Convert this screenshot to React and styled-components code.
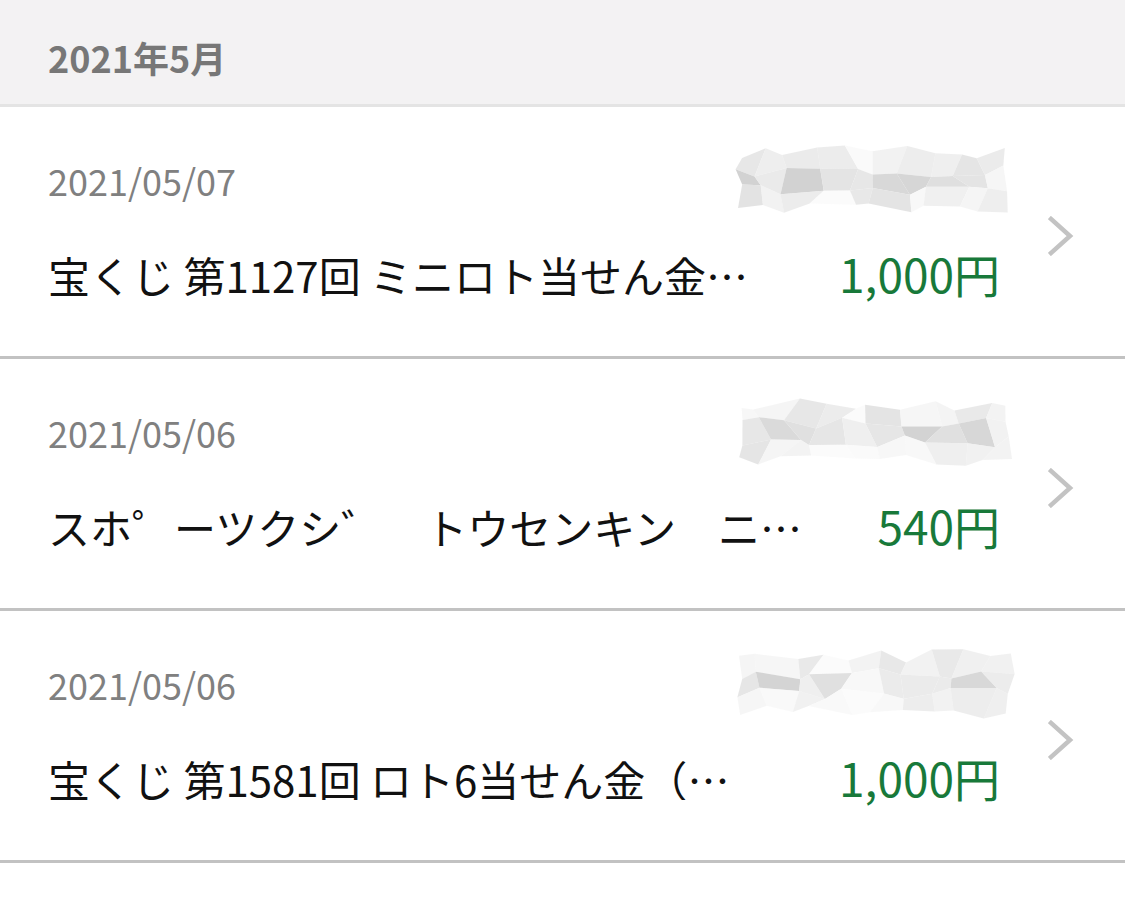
import React from "react";
import styled, { createGlobalStyle } from "styled-components";

const Global = createGlobalStyle`
  html, body { margin: 0; padding: 0; background: #ffffff; }
  body { font-family: "Noto Sans CJK JP", "Noto Sans", sans-serif; }
`;

const Page = styled.div`
  width: 1125px;
  background: #ffffff;
`;

const MonthHeader = styled.div`
  height: 107px;
  box-sizing: border-box;
  padding: 10px 0 0 48px;
  display: flex;
  align-items: center;
  background: #f3f2f3;
  border-bottom: 3px solid #e4e4e4;
  color: #777777;
  font-size: 36px;
  font-weight: 700;
  line-height: 1;
`;

const Row = styled.div`
  height: 249px;
  display: grid;
  grid-template-columns: 1fr 26px;
  column-gap: 48px;
  padding: 0 51px 0 48px;
  align-items: center;
  border-bottom: 3px solid #c2c2c2;
`;

const Main = styled.div`
  display: flex;
  flex-direction: column;
  min-width: 0;
  align-self: start;
  padding-top: 38px;
`;

const TopLine = styled.div`
  height: 70px;
  display: flex;
  align-items: center;
  justify-content: space-between;
`;

const DateText = styled.span`
  font-size: 36px;
  line-height: 1;
  color: #808080;
`;

const BottomLine = styled.div`
  margin-top: 35px;
  display: flex;
  align-items: baseline;
  gap: 70px;
`;

const Title = styled.span`
  flex: 1;
  min-width: 0;
  font-size: 42px;
  line-height: 1;
  color: #111111;
  white-space: nowrap;
  overflow: hidden;
  text-overflow: ellipsis;
`;

const Amount = styled.span`
  flex: none;
  font-size: 46px;
  line-height: 1;
  color: #18793a;
`;

const MosaicSvg = styled.svg`
  display: block;
  margin-right: -15px;
  flex: none;
`;

const ChevronSvg = styled.svg`
  display: block;
  margin-top: 8px;
`;

function rng(seed) {
  let s = seed;
  return () => {
    s = (s * 9301 + 49297) % 233280;
    return s / 233280;
  };
}

function Mosaic({ seed }) {
  const r = rng(seed);
  const cols = 10;
  const rows = 3;
  const W = 280;
  const H = 72;
  const cw = W / cols;
  const rh = (H - 16) / rows;
  const v = [];
  for (let i = 0; i <= cols; i++) {
    v[i] = [];
    for (let j = 0; j <= rows; j++) {
      const jx = i === 0 ? r() * 8 : i === cols ? -r() * 12 : (r() - 0.5) * cw * 0.8;
      const jy =
        j === 0 || j === rows ? (r() - 0.5) * 14 : (r() - 0.5) * rh * 0.7;
      v[i][j] = [i * cw + jx, 8 + j * rh + jy];
    }
  }
  const polys = [];
  for (let i = 0; i < cols; i++) {
    for (let j = 0; j < rows; j++) {
      const outer = j === rows - 1 || j === 0 || i === cols - 1;
      const gap = i === 3 || i === 4 ? r() < 0.5 : false;
      let g;
      if (gap) g = 248;
      else if (outer) g = Math.round(224 + r() * 22);
      else g = Math.round(206 + r() * 32);
      const pts = [v[i][j], v[i + 1][j], v[i + 1][j + 1], v[i][j + 1]]
        .map((p) => p.map((n) => n.toFixed(1)).join(","))
        .join(" ");
      polys.push(
        <polygon
          key={`${i}-${j}`}
          points={pts}
          fill={`rgb(${g},${g},${g})`}
          fillOpacity={outer ? 0.6 + r() * 0.35 : 0.88 + r() * 0.12}
        />
      );
    }
  }
  return (
    <MosaicSvg width={W} height={H} viewBox={`0 0 ${W} ${H}`}>
      {polys}
    </MosaicSvg>
  );
}

function Chevron() {
  return (
    <ChevronSvg width="26" height="40" viewBox="0 0 26 40">
      <polyline
        points="3,3 22,20 3,37"
        fill="none"
        stroke="#c3c3c3"
        strokeWidth="4.5"
        strokeLinecap="square"
      />
    </ChevronSvg>
  );
}

const items = [
  {
    date: "2021/05/07",
    title: "宝くじ 第1127回 ミニロト当せん金（ミニロト）",
    amount: "1,000円",
    seed: 17,
  },
  {
    date: "2021/05/06",
    title: "スホ゜ーツクシ゛　トウセンキン　ニシ゛ュウイチ",
    amount: "540円",
    seed: 91,
  },
  {
    date: "2021/05/06",
    title: "宝くじ 第1581回 ロト6当せん金（ロト6）",
    amount: "1,000円",
    seed: 233,
  },
];

export default function App() {
  return (
    <Page>
      <Global />
      <MonthHeader>2021年5月</MonthHeader>
      {items.map((it, idx) => (
        <Row key={idx}>
          <Main>
            <TopLine>
              <DateText>{it.date}</DateText>
              <Mosaic seed={it.seed} />
            </TopLine>
            <BottomLine>
              <Title>{it.title}</Title>
              <Amount>{it.amount}</Amount>
            </BottomLine>
          </Main>
          <Chevron />
        </Row>
      ))}
    </Page>
  );
}
